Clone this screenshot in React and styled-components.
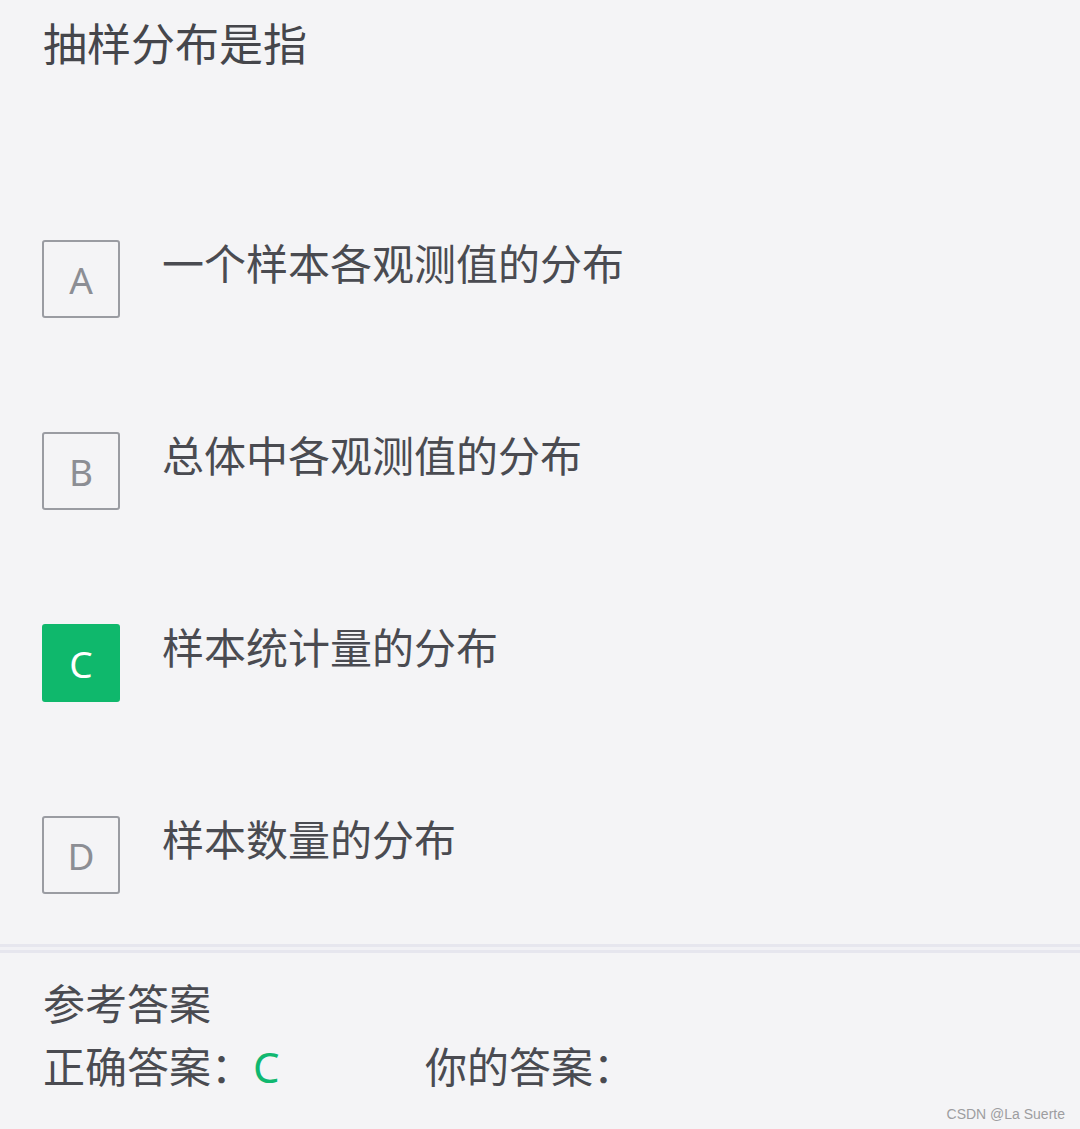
import styled, { createGlobalStyle } from "styled-components";

const GlobalStyle = createGlobalStyle`
  html, body {
    margin: 0;
    padding: 0;
    background: #f4f4f6;
  }
  body {
    font-family: "Noto Sans CJK SC", "Noto Sans", sans-serif;
    color: #4a4b51;
  }
`;

const options = [
  { key: "A", text: "一个样本各观测值的分布" },
  { key: "B", text: "总体中各观测值的分布" },
  { key: "C", text: "样本统计量的分布", correct: true },
  { key: "D", text: "样本数量的分布" },
];

export default function App() {
  return (
    <>
      <GlobalStyle />
      <Page>
        <Question>
          <Title>抽样分布是指</Title>
          <OptionList>
            {options.map((o) => (
              <OptionRow key={o.key}>
                <LetterBox $active={o.correct}>{o.key}</LetterBox>
                <OptionText>{o.text}</OptionText>
              </OptionRow>
            ))}
          </OptionList>
        </Question>
        <Divider />
        <AnswerPanel>
          <AnswerTitle>参考答案</AnswerTitle>
          <AnswerLine>
            <AnswerItem>
              正确答案：<Green>C</Green>
            </AnswerItem>
            <AnswerItem>你的答案：</AnswerItem>
          </AnswerLine>
        </AnswerPanel>
        <Watermark>CSDN @La Suerte</Watermark>
      </Page>
    </>
  );
}

const Page = styled.div`
  width: 1080px;
  min-height: 1129px;
  display: flex;
  flex-direction: column;
`;
const Question = styled.div`
  padding: 20px 0 0 42px;
`;
const Title = styled.h1`
  margin: 0 0 0 1px;
  font-weight: 400;
  font-size: 44px;
  line-height: 44px;
  color: #45464b;
`;
const OptionList = styled.div`
  margin-top: 176px;
  display: flex;
  flex-direction: column;
  gap: 114px;
`;
const OptionRow = styled.div`
  display: flex;
  flex-direction: row;
  align-items: flex-start;
`;
const LetterBox = styled.div`
  box-sizing: border-box;
  width: 78px;
  height: 78px;
  border-radius: 3px;
  border: 2px solid ${(p) => (p.$active ? "#0fb86c" : "#9a9ca2")};
  background: ${(p) => (p.$active ? "#0fb86c" : "transparent")};
  color: ${(p) => (p.$active ? "#ffffff" : "#8c8e94")};
  display: flex;
  justify-content: center;
  align-items: center;
  font-family: "Noto Sans", sans-serif;
  font-weight: 400;
  font-size: 37px;
  line-height: 1;
`;
const OptionText = styled.div`
  margin-left: 42px;
  margin-top: 1px;
  font-size: 42px;
  line-height: 42px;
  color: #4a4b51;
`;
const Divider = styled.div`
  margin-top: 50px;
  height: 3px;
  border-top: 3px solid #e6e6ee;
  border-bottom: 3px solid #e6e6ee;
  background: #f1f1f5;
`;
const AnswerPanel = styled.div`
  padding: 28px 0 0 43px;
  display: flex;
  flex-direction: column;
  gap: 21px;
`;
const AnswerTitle = styled.div`
  font-size: 42px;
  line-height: 42px;
  color: #4a4b51;
`;
const AnswerLine = styled.div`
  display: flex;
  flex-direction: row;
  font-size: 42px;
  line-height: 42px;
`;
const AnswerItem = styled.div`
  width: 382px;
  color: #4a4b51;
`;
const Green = styled.span`
  font-family: "Noto Sans", sans-serif;
  color: #10b870;
`;
const Watermark = styled.div`
  margin-top: auto;
  align-self: flex-end;
  padding: 0 15px 7px 0;
  font-family: "Liberation Sans", Arial, sans-serif;
  font-size: 14px;
  color: #9d9da0;
`;
